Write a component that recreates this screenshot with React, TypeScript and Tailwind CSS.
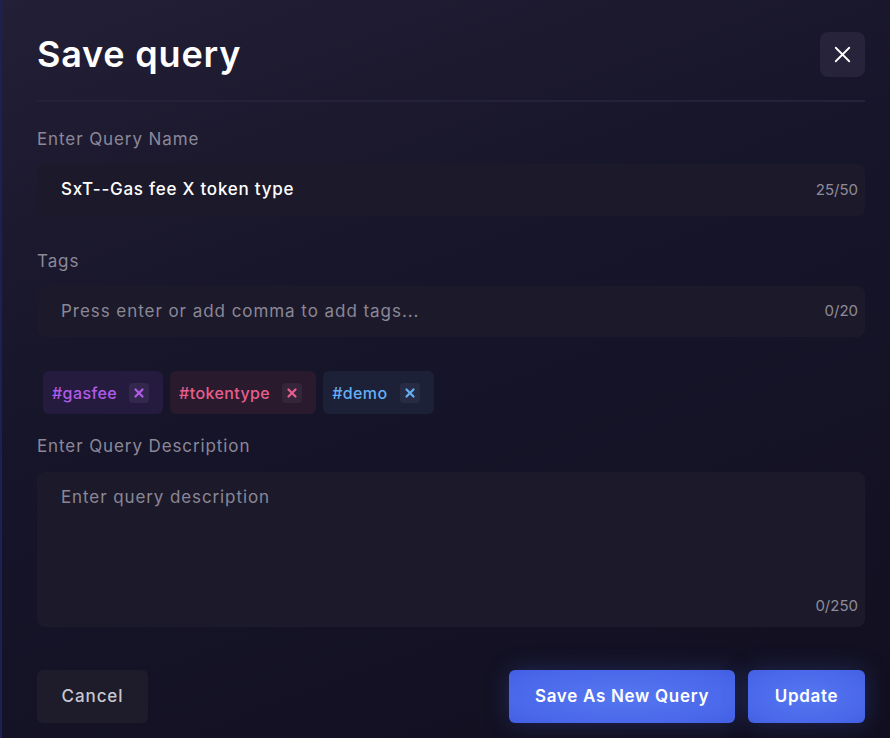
import React from "react";

const XIcon = ({ className = "", sw = 2.4 }: { className?: string; sw?: number }) => (
  <svg viewBox="0 0 24 24" className={className} fill="none" stroke="currentColor" strokeWidth={sw} strokeLinecap="round">
    <path d="M6 6l12 12M18 6L6 18" />
  </svg>
);

const Tag = ({ label, bg, fg, btn }: { label: string; bg: string; fg: string; btn: string }) => (
  <div className={`flex h-[43px] items-center gap-[12px] rounded-md pl-[9px] pr-[14px] ${bg}`}>
    <span className={`text-[16px] font-medium tracking-[0.4px] ${fg}`}>{label}</span>
    <span className={`flex h-[20px] w-[20px] items-center justify-center rounded ${btn} ${fg}`}>
      <XIcon className="h-[14px] w-[14px]" sw={3.8} />
    </span>
  </div>
);

export default function App() {
  return (
    <div
      className="h-[738px] w-[890px] overflow-hidden border-l-2 border-[#1b2150] bg-[linear-gradient(160deg,#231f36_0%,#17152a_40%,#110f1f_100%)] text-white"
      style={{ fontFamily: "Inter, 'Noto Sans', sans-serif" }}
    >
      <div className="flex flex-col pl-[35px] pr-[25px]">
        <div className="flex items-center justify-between pt-[32px] pb-[23px]">
          <h1 className="text-[36px] font-semibold leading-[45px] tracking-[0.8px] text-white">Save query</h1>
          <button className="flex h-[45px] w-[45px] items-center justify-center rounded-lg bg-[#26233a] text-white">
            <XIcon className="h-[27px] w-[27px]" sw={1.6} />
          </button>
        </div>
        <div className="h-[2px] w-full bg-[#24223a]" />

        <label className="mt-[25px] text-[17px] leading-[24px] tracking-[0.9px] text-[#8b8898]">Enter Query Name</label>
        <div className="mt-[13px] flex h-[52px] items-center justify-between rounded-lg bg-[#1c1a2a] pl-[24px] pr-[7px]">
          <span className="text-[17px] font-medium tracking-[0.75px] text-white">SxT--Gas fee X token type</span>
          <span className="text-[15px] text-[#8f8c9a]">25/50</span>
        </div>

        <label className="mt-[33px] text-[17px] leading-[24px] tracking-[0.9px] text-[#8b8898]">Tags</label>
        <div className="mt-[13px] flex h-[51px] items-center justify-between rounded-lg bg-[#1c1a2a] pl-[24px] pr-[7px]">
          <span className="text-[17px] tracking-[0.95px] text-[#8a8797]">Press enter or add comma to add tags...</span>
          <span className="text-[15px] text-[#8f8c9a]">0/20</span>
        </div>

        <div className="mt-[34px] flex gap-[7px] pl-[6px]">
          <Tag label="#gasfee" bg="bg-[#251b3e]" fg="text-[#b15ce8]" btn="bg-[#33274d]" />
          <Tag label="#tokentype" bg="bg-[#2a1a2d]" fg="text-[#e65f8e]" btn="bg-[#35253a]" />
          <Tag label="#demo" bg="bg-[#1c2138]" fg="text-[#65aef5]" btn="bg-[#272c44]" />
        </div>

        <label className="mt-[20px] text-[17px] leading-[24px] tracking-[0.9px] text-[#8b8898]">Enter Query Description</label>
        <div className="mt-[14px] flex h-[155px] flex-col justify-between rounded-lg bg-[#1c1a2a] pt-[13px] pb-[10px] pl-[24px] pr-[7px]">
          <span className="text-[17px] tracking-[0.9px] text-[#8a8797]">Enter query description</span>
          <span className="self-end text-[15px] text-[#8f8c9a]">0/250</span>
        </div>

        <div className="mt-[43px] flex items-center justify-between">
          <button className="h-[53px] w-[111px] rounded-md bg-[#1e1c2b] text-[17px] font-medium tracking-[0.9px] text-[#c9c7d1]">Cancel</button>
          <div className="flex gap-[13px]">
            <button className="h-[53px] w-[226px] rounded-md bg-[radial-gradient(ellipse_at_center,#5577f2_0%,#4a68ea_70%,#4360e4_100%)] text-[17px] font-semibold tracking-[0.7px] text-white shadow-[0_0_24px_rgba(80,110,240,0.25)]">
              Save As New Query
            </button>
            <button className="h-[53px] w-[117px] rounded-md bg-[radial-gradient(ellipse_at_center,#5577f2_0%,#4a68ea_70%,#4360e4_100%)] text-[17px] font-semibold tracking-[0.7px] text-white shadow-[0_0_24px_rgba(80,110,240,0.25)]">
              Update
            </button>
          </div>
        </div>
      </div>
    </div>
  );
}
